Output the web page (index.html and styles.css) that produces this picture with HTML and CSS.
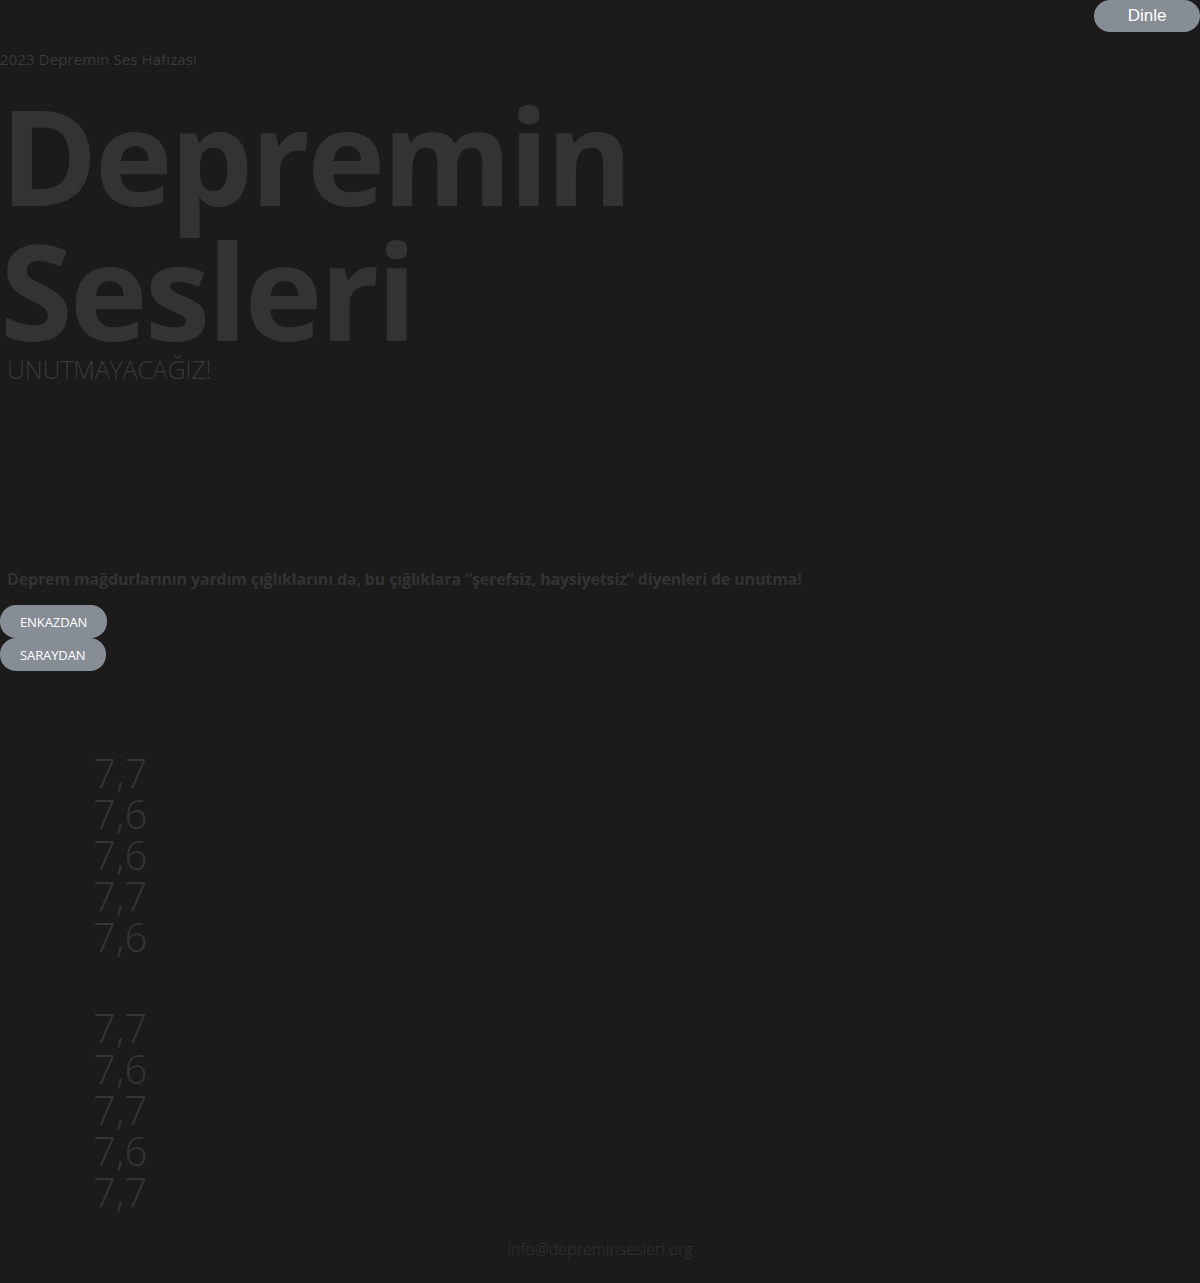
FILE: index.html
```html
<!DOCTYPE html>
<html lang="tr">
<head>
<meta charset="utf-8">
<title>Depremin Sesleri</title>
<link rel="stylesheet" href="styles.css">
</head>
<body>
<header class="topbar">
  <button class="listen">Dinle</button>
</header>
<main>
  <p class="kicker">2023 Depremin Ses Hafızası</p>
  <h1 class="title">Depremin<br>Sesleri</h1>
  <p class="slogan">UNUTMAYACAĞIZ!</p>
  <p class="lead">Deprem mağdurlarının yardım çığlıklarını da, bu çığlıklara “şerefsiz, haysiyetsiz” diyenleri de unutma!</p>
  <div class="tabs">
    <button class="tab">ENKAZDAN</button>
    <button class="tab">SARAYDAN</button>
  </div>
  <section class="magnitudes">
    <ul class="group">
      <li>7,7</li><li>7,6</li><li>7,6</li><li>7,7</li><li>7,6</li>
    </ul>
    <ul class="group">
      <li>7,7</li><li>7,6</li><li>7,7</li><li>7,6</li><li>7,7</li>
    </ul>
  </section>
</main>
<footer class="footer">info@depreminsesleri.org</footer>
</body>
</html>
```
FILE: styles.css
```css
html, body {
  margin: 0;
  padding: 0;
  background: #1b1b1b;
}
body {
  font-family: "Open Sans", "Noto Sans", sans-serif;
  color: #353535;
  min-height: 1283px;
}
.topbar {
  display: flex;
  justify-content: flex-end;
  height: 32px;
}
.listen {
  width: 106px;
  height: 32px;
  border: 0;
  border-radius: 16px;
  background: #878d94;
  color: #fff;
  font-family: "Liberation Sans", Arial, sans-serif;
  font-size: 17px;
  padding: 0 0 1px;
}
.kicker {
  margin: 17px 0 0;
  font-size: 15px;
  line-height: 20px;
  color: #3a3a3a;
  letter-spacing: 0.1px;
}
.title {
  margin: 19px 0 0;
  font-size: 132px;
  line-height: 135px;
  font-weight: 700;
  color: #333333;
  letter-spacing: -3px;
}
.slogan {
  margin: -4px 0 0 7px;
  font-size: 25px;
  line-height: 30px;
  font-weight: 300;
  color: #3a3a3a;
  letter-spacing: -0.2px;
}
.lead {
  margin: 183px 0 0 7px;
  font-size: 16px;
  line-height: 24px;
  font-weight: 700;
  color: #333333;
  letter-spacing: -0.15px;
}
.tabs {
  margin-top: 14px;
  display: flex;
  flex-direction: column;
  align-items: flex-start;
}
.tab {
  height: 33px;
  padding: 0 20px;
  border: 0;
  border-radius: 16px;
  background: #878d94;
  color: #fff;
  font-family: "Open Sans", "Noto Sans", sans-serif;
  font-size: 13px;
  letter-spacing: -0.1px;
}
.magnitudes {
  margin-top: 81px;
  padding-left: 93px;
}
.group {
  list-style: none;
  margin: 0;
  padding: 0;
}
.group + .group {
  margin-top: 50px;
}
.group li {
  font-size: 40px;
  line-height: 41px;
  font-weight: 300;
  color: #353535;
}
.footer {
  margin-top: 25px;
  text-align: center;
  font-size: 16px;
  line-height: 24px;
  font-weight: 300;
  color: #353535;
}
```
